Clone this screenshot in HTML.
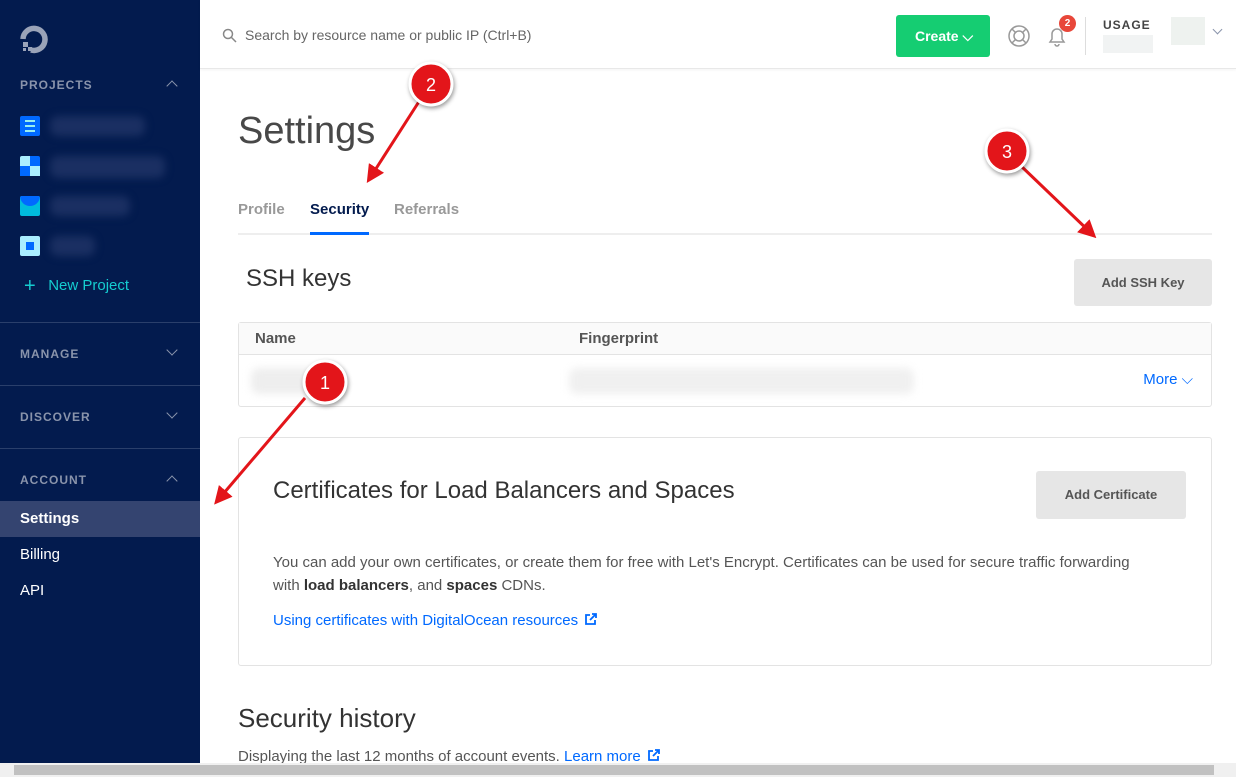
<!DOCTYPE html><html><head><style>
*{box-sizing:border-box;margin:0;padding:0}
body{width:1236px;height:777px;overflow:hidden;font-family:"Liberation Sans",sans-serif;background:#fff;position:relative;color:#333}
.sb{position:absolute;left:0;top:0;width:200px;height:763px;background:#031b4e}
.sec{position:absolute;left:20px;font-size:12px;font-weight:bold;letter-spacing:1px;color:#8a94ab}
.chev{position:absolute;left:168px;width:8px;height:8px;border-left:1.5px solid #8a94ab;border-top:1.5px solid #8a94ab}
.hr{position:absolute;left:0;width:200px;height:1px;background:#2a3f6b}
.ic{position:absolute;left:20px;width:20px;height:20px;border-radius:2px}
.blur{position:absolute;background:#1a2f62;border-radius:8px;filter:blur(4px)}
.nav{position:absolute;left:20px;font-size:15px;color:#fff}
.top{position:absolute;left:200px;top:0;width:1036px;height:69px;border-bottom:1px solid #e8e8e8;box-shadow:0 1px 3px rgba(0,0,0,.05)}
.btn{position:absolute;background:#e6e6e6;border-radius:3px;font-size:13px;font-weight:bold;color:#555;text-align:center}
a{color:#0069ff;text-decoration:none}
.ext{display:inline-block;vertical-align:-1px;margin-left:6px}
</style></head><body>
<div class="sb">
<svg style="position:absolute;left:19px;top:25px" width="32" height="30" viewBox="0 0 32 30"><path d="M12 25 A11 11 0 1 0 4 14" fill="none" stroke="#9aa3b8" stroke-width="5.5"/><rect x="4" y="17" width="5" height="5" fill="#9aa3b8"/><rect x="9" y="22" width="4" height="4" fill="#9aa3b8"/><rect x="4" y="23" width="3" height="3" fill="#9aa3b8"/></svg>
<div class="sec" style="top:78px">PROJECTS</div><div class="chev" style="top:82px;transform:rotate(45deg)"></div>
<div class="ic" style="top:116px;background:#0069ff"><div style="margin:4px 5px;height:12px;border-top:2px solid #9ee;border-bottom:2px solid #9ee;background:linear-gradient(#0069ff 3px,#9ee 3px,#9ee 5px,#0069ff 5px)"></div></div>
<div class="ic" style="top:156px;background:linear-gradient(90deg,#aef 50%,#0069ff 50%)"><div style="width:10px;height:10px;margin:10px 0 0 0;background:#0069ff"></div><div style="position:absolute;left:10px;top:10px;width:10px;height:10px;background:#aef"></div></div>
<div class="ic" style="top:196px;background:#0bd;overflow:hidden"><div style="height:10px;background:#0069ff;border-radius:0 0 10px 10px"></div></div>
<div class="ic" style="top:236px;background:#aef"><div style="width:8px;height:8px;margin:6px;background:#0069ff"></div></div>
<div class="blur" style="left:50px;top:116px;width:95px;height:20px"></div>
<div class="blur" style="left:50px;top:156px;width:115px;height:22px"></div>
<div class="blur" style="left:50px;top:196px;width:80px;height:20px"></div>
<div class="blur" style="left:50px;top:236px;width:45px;height:20px"></div>
<div class="nav" style="top:275px;color:#15cdd0;left:24px"><span style="font-size:20px;vertical-align:-2px">+</span>&nbsp;&nbsp;&nbsp;New Project</div>
<div class="hr" style="top:322px"></div>
<div class="sec" style="top:347px">MANAGE</div><div class="chev" style="top:346px;transform:rotate(225deg)"></div>
<div class="hr" style="top:385px"></div>
<div class="sec" style="top:410px">DISCOVER</div><div class="chev" style="top:409px;transform:rotate(225deg)"></div>
<div class="hr" style="top:448px"></div>
<div class="sec" style="top:473px">ACCOUNT</div><div class="chev" style="top:477px;transform:rotate(45deg)"></div>
<div style="position:absolute;top:501px;left:0;width:200px;height:36px;background:#344470"></div>
<div class="nav" style="top:510px;font-weight:bold">Settings</div>
<div class="nav" style="top:546px">Billing</div>
<div class="nav" style="top:582px">API</div>
</div>
<div class="top">
<svg style="position:absolute;left:22px;top:28px" width="16" height="16"><circle cx="6" cy="6" r="4.5" fill="none" stroke="#888" stroke-width="1.5"/><path d="M9.5 9.5L14 14" stroke="#888" stroke-width="1.5"/></svg>
<div style="position:absolute;left:45px;top:27px;font-size:14px;color:#666">Search by resource name or public IP (Ctrl+B)</div>
<div style="position:absolute;left:696px;top:15px;width:94px;height:42px;background:#15cd72;border-radius:3px;color:#fff;font-size:14px;font-weight:bold;line-height:42px;padding-left:19px">Create ⌵</div>
<svg style="position:absolute;left:807px;top:24px" width="24" height="24"><circle cx="12" cy="12" r="10" fill="none" stroke="#999" stroke-width="1.5"/><circle cx="12" cy="12" r="5" fill="none" stroke="#999" stroke-width="1.5"/><path d="M5 5l4 4M19 5l-4 4M5 19l4-4M19 19l-4-4" stroke="#999" stroke-width="1.5"/></svg>
<svg style="position:absolute;left:845px;top:24px" width="24" height="24"><path d="M5 18h14l-2-3v-5a5 5 0 0 0-10 0v5z M10 20a2 2 0 0 0 4 0" fill="none" stroke="#999" stroke-width="1.5"/></svg>
<div style="position:absolute;left:859px;top:15px;width:17px;height:17px;border-radius:50%;background:#e8473a;color:#fff;font-size:10px;font-weight:bold;text-align:center;line-height:17px">2</div>
<div style="position:absolute;left:885px;top:17px;width:1px;height:38px;background:#ddd"></div>
<div style="position:absolute;left:903px;top:18px;font-size:12px;font-weight:bold;letter-spacing:1px;color:#444">USAGE</div>
<div style="position:absolute;left:903px;top:35px;width:50px;height:18px;background:#f1f3f3"></div>
<div style="position:absolute;left:971px;top:17px;width:34px;height:28px;background:#eef2ef"></div>
<div style="position:absolute;left:1014px;top:26px;width:7px;height:7px;border-right:1.5px solid #8a94ab;border-bottom:1.5px solid #8a94ab;transform:rotate(45deg)"></div>
</div>
<div style="position:absolute;left:238px;top:110px;font-size:38px;color:#484848">Settings</div>
<div style="position:absolute;left:238px;top:201px;font-size:15px;font-weight:bold;color:#999">Profile</div>
<div style="position:absolute;left:310px;top:201px;font-size:15px;font-weight:bold;color:#031b4e">Security</div>
<div style="position:absolute;left:394px;top:201px;font-size:15px;font-weight:bold;color:#999">Referrals</div>
<div style="position:absolute;left:238px;top:233px;width:974px;height:2px;background:#eee"></div>
<div style="position:absolute;left:310px;top:232px;width:59px;height:3px;background:#0069ff"></div>
<div style="position:absolute;left:246px;top:265px;font-size:24px;color:#333">SSH keys</div>
<div class="btn" style="left:1074px;top:259px;width:138px;height:47px;line-height:47px">Add SSH Key</div>
<div style="position:absolute;left:238px;top:322px;width:974px;height:85px;border:1px solid #e3e3e3;border-radius:3px">
<div style="height:32px;border-bottom:1px solid #e3e3e3;background:#fafafa;font-size:15px;font-weight:bold;color:#555;line-height:31px"><span style="position:absolute;left:16px">Name</span><span style="position:absolute;left:340px">Fingerprint</span></div>
<div class="blur" style="left:12px;top:45px;width:90px;height:26px;background:#eee"></div>
<div class="blur" style="left:330px;top:45px;width:345px;height:26px;background:#f0f0f0"></div>
<div style="position:absolute;right:18px;top:48px;font-size:15px;color:#0069ff">More ⌵</div>
</div>
<div style="position:absolute;left:238px;top:437px;width:974px;height:229px;border:1px solid #e3e3e3;border-radius:3px">
<div style="position:absolute;left:34px;top:39px;font-size:24px;color:#333">Certificates for Load Balancers and Spaces</div>
<div class="btn" style="left:797px;top:33px;width:150px;height:48px;line-height:48px">Add Certificate</div>
<div style="position:absolute;left:34px;top:113px;width:870px;font-size:15px;line-height:23px;color:#555">You can add your own certificates, or create them for free with Let's Encrypt. Certificates can be used for secure traffic forwarding with <b style="color:#333">load balancers</b>, and <b style="color:#333">spaces</b> CDNs.</div>
<div style="position:absolute;left:34px;top:174px;font-size:15px"><a>Using certificates with DigitalOcean resources<svg class="ext" width="13" height="13"><path d="M6 2H2v9h9V7" fill="none" stroke="#0069ff" stroke-width="1.8"/><path d="M6 7L12 1M8 1h4v4" fill="none" stroke="#0069ff" stroke-width="1.8"/></svg></a></div>
</div>
<div style="position:absolute;left:238px;top:703px;font-size:26px;color:#333">Security history</div>
<div style="position:absolute;left:238px;top:748px;font-size:15px;color:#555">Displaying the last 12 months of account events. <a>Learn more<svg class="ext" width="13" height="13"><path d="M6 2H2v9h9V7" fill="none" stroke="#0069ff" stroke-width="1.8"/><path d="M6 7L12 1M8 1h4v4" fill="none" stroke="#0069ff" stroke-width="1.8"/></svg></a></div>
<div style="position:absolute;left:0;top:763px;width:1236px;height:14px;background:#f0f0f0"><div style="position:absolute;left:14px;top:2px;width:1200px;height:10px;background:#c1c1c1"></div></div>
<svg style="position:absolute;left:0;top:0" width="1236" height="777">
<defs><marker id="m" markerWidth="6" markerHeight="6" refX="4" refY="3" orient="auto"><path d="M0 0L6 3L0 6z" fill="#e3151a"/></marker></defs>
<g stroke="#e3151a" stroke-width="3" marker-end="url(#m)"><line x1="305" y1="398" x2="218" y2="500"/><line x1="420" y1="100" x2="370" y2="178"/><line x1="1020" y1="165" x2="1092" y2="234"/></g>
<g fill="#e3151a" stroke="#fff" stroke-width="3" style="filter:drop-shadow(1px 2px 2px rgba(0,0,0,.4))"><circle cx="325" cy="382" r="21"/><circle cx="431" cy="84" r="21"/><circle cx="1007" cy="151" r="21"/></g>
<g fill="#fff" font-size="18" text-anchor="middle" font-family="Liberation Sans"><text x="325" y="389">1</text><text x="431" y="91">2</text><text x="1007" y="158">3</text></g>
</svg>
</body></html>
